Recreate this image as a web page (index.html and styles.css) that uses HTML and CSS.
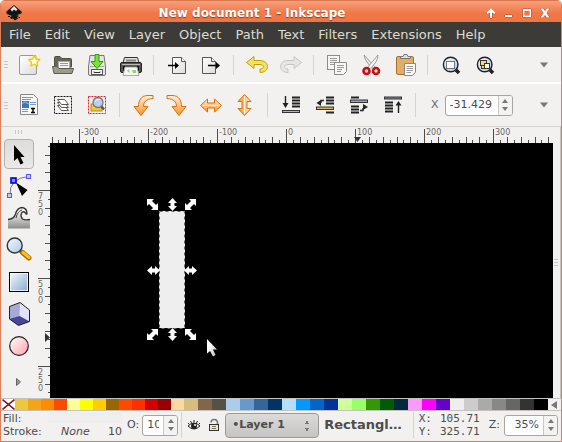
FILE: index.html
```html
<!DOCTYPE html>
<html lang="en">
<head>
<meta charset="utf-8">
<title>New document 1 - Inkscape</title>
<link rel="stylesheet" href="styles.css">
</head>
<body>
<svg class="defs" aria-hidden="true">
  <defs>
    <linearGradient id="paper" x1="0" y1="0" x2="1" y2="1"><stop offset="0" stop-color="#fff"/><stop offset="1" stop-color="#dcdcdc"/></linearGradient>
    <linearGradient id="orange" x1="0" y1="0" x2="0" y2="1"><stop offset="0" stop-color="#fff0dc"/><stop offset="1" stop-color="#fb9226"/></linearGradient>
    <linearGradient id="lens" x1="0" y1="0" x2="1" y2="1"><stop offset="0" stop-color="#f4faff"/><stop offset="1" stop-color="#a9c8ea"/></linearGradient>
    <linearGradient id="blue" x1="0" y1="0" x2="1" y2="1"><stop offset="0" stop-color="#f6fafd"/><stop offset="1" stop-color="#86aace"/></linearGradient>
    <linearGradient id="pink" x1="0" y1="0" x2="1" y2="1"><stop offset="0" stop-color="#fff"/><stop offset="1" stop-color="#ff9fae"/></linearGradient>
    <linearGradient id="wave" x1="0" y1="0" x2="0" y2="1"><stop offset="0.2" stop-color="#f4f4f4"/><stop offset="1" stop-color="#8c8c8c"/></linearGradient>
    <linearGradient id="pointer" x1="0" y1="0" x2="1" y2="1"><stop offset="0.3" stop-color="#fff"/><stop offset="1" stop-color="#bbb"/></linearGradient>
    <symbol id="turn" viewBox="0 0 24 24"><path d="M22 2.500H17C9.500 2.500 7.500 8 7.500 13.500H3L10 22.500 17 13.500H12.500C12.500 9 15 6 22 5.500Z" fill="url(#orange)" stroke="#d4710c" stroke-linejoin="round"/></symbol>
    <symbol id="flip" viewBox="0 0 24 24"><path d="M1.500 12.500 8.500 6V10H15.500V6L22.500 12.500 15.500 19V15H8.500V19Z" fill="url(#orange)" stroke="#d4710c" stroke-linejoin="round"/><path d="M3.500 12.500H20.500" stroke="#fff0d8" stroke-width="1"/></symbol>
    <symbol id="magnify" viewBox="0 0 24 24"><path d="M17 17 20 20" stroke="#222" stroke-width="3.500"/><circle cx="11.700" cy="11.500" r="7.300" fill="url(#lens)" stroke="#222" stroke-width="1.400"/></symbol>
    <symbol id="diag" viewBox="0 0 11 11"><path d="M0 0H7L5 2 9 6 11 4V11H4L6 9 2 5 0 7Z" fill="#fff"/></symbol>
    <symbol id="upright" viewBox="0 0 9 13"><path d="M4.500 0 9 5H6.500V8H9L4.500 13 0 8H2.500V5H0Z" fill="#fff"/></symbol>
    <symbol id="level" viewBox="0 0 13 9"><path d="M0 4.500 5 0V2.500H8V0L13 4.500 8 9V6.500H5V9Z" fill="#fff"/></symbol>
    <pattern id="ticks-x" width="69" height="16" x="29" patternUnits="userSpaceOnUse"><path d="M.5 2V16M7.500 13V16M14.500 10V16M21.500 13V16M28.500 10V16M35.500 13V16M42.500 10V16M48.500 13V16M55.500 10V16M62.500 13V16" stroke="#4c4c4c"/></pattern>
    <pattern id="ticks-y" width="14" height="88" y="47" patternUnits="userSpaceOnUse"><path d="M2 .5H14M12 9.500H14M9 18.500H14M12 26.500H14M9 35.500H14M12 44.500H14M9 53.500H14M12 61.500H14M9 70.500H14M12 79.500H14" stroke="#4c4c4c"/></pattern>
  </defs>
</svg>

<div class="window">
  <header class="titlebar">
    <svg class="logo" width="16" height="16" viewBox="0 0 16 16"><path d="M8 0 15.500 6.500Q16.500 8.500 14 9L11 10 13 11 11 12 12 13.500 9 15.500 7 13.500 5 14 4 12 6 11 2 9.500Q-.5 8.500.5 6.500Z" fill="#151515"/><path d="M8 1 11.500 4.500 10 6 8 4.500 6 6.500 4.500 4.500Z" fill="#dbe7f4"/><path d="M2 11.500H4M12.500 12.500H14" stroke="#151515"/></svg>
    <h1>New document 1 - Inkscape</h1>
    <button class="win" aria-label="Shade"><svg width="12" height="12" viewBox="0 0 12 12"><path d="M6 1 10.500 5.500 9.500 7 7 5.500V11H5V5.500L2.500 7 1.500 5.500Z"/></svg></button>
    <button class="win" aria-label="Minimize"><svg width="12" height="12" viewBox="0 0 12 12"><path d="M2 8H9V10H2Z"/></svg></button>
    <button class="win" aria-label="Maximize"><svg width="12" height="12" viewBox="0 0 12 12"><path fill-rule="evenodd" d="M2 2H10V10H2ZM3.500 4V8.500H8.500V4Z"/></svg></button>
    <button class="win" aria-label="Close"><svg width="12" height="12" viewBox="0 0 12 12"><path d="M1.500 1.500H4L6 4 8 1.500H10.500L7.500 6 10.500 10.500H8L6 8 4 10.500H1.500L4.500 6Z"/></svg></button>
  </header>

  <nav class="menubar">
    <a href="#">File</a><a href="#">Edit</a><a href="#">View</a><a href="#">Layer</a><a href="#">Object</a><a href="#">Path</a><a href="#">Text</a><a href="#">Filters</a><a href="#">Extensions</a><a href="#">Help</a>
  </nav>

  <div class="toolbar commands">
    <span class="grip"></span>
    <button aria-label="New"><svg viewBox="0 0 24 24"><rect x="2.500" y="2.500" width="17" height="19" rx="1.500" fill="url(#paper)" stroke="#999"/><circle cx="17.300" cy="8" r="5.500" fill="#fff9a0" opacity=".6"/><path d="M17.300 2.500 19 6 22.800 6.500 20 9.200 20.700 13 17.300 11.200 13.900 13 14.600 9.200 11.800 6.500 15.600 6Z" fill="#fffde0" stroke="#e8c90a" stroke-width="1.300" stroke-linejoin="round"/></svg></button>
    <button aria-label="Open"><svg viewBox="0 0 24 24"><path d="M3.500 14V4.500Q3.500 3.500 4.500 3.500H9L11 5.500H19.500Q20.500 5.500 20.500 6.500V14Z" fill="#66675a" stroke="#505146"/><rect x="7.500" y="8.500" width="11" height="7" fill="#f5f5f5" stroke="#aaa"/><path d="M9 10.500H17M9 12.500H17" stroke="#999"/><path d="M1.500 13.500H6L8 15.500H22.500L21 20.500H3Z" fill="#9b9c8b" stroke="#5c5d50" stroke-linejoin="round"/></svg></button>
    <button aria-label="Save"><svg viewBox="0 0 24 24"><path d="M5 2.500H19L20.500 14V21Q20.500 22.500 19 22.500H5Q3.500 22.500 3.500 21V14Z" fill="#e4e4e2" stroke="#777"/><path d="M5 13.500H19" stroke="#aaa"/><rect x="6.500" y="16.500" width="11" height="5" fill="#f8f8f8" stroke="#555"/><path d="M9 18.500V19.500H15V18.500" fill="none" stroke="#333"/><path d="M10 1.500H14V8.500H18L12 15.500 6 8.500H10Z" fill="#7be03c" stroke="#339a10" stroke-linejoin="round"/></svg></button>
    <button aria-label="Print"><svg viewBox="0 0 24 24"><path d="M5.500 4.500H18.500L20 10H4Z" fill="#ddd" stroke="#333"/><path d="M7 6.500H17V8.500H7Z" fill="#888"/><rect x="1.500" y="9.500" width="21" height="10" rx="1.500" fill="#555754" stroke="#222"/><path d="M3 11.500H21" stroke="#bbb"/><rect x="4" y="13" width="16" height="5" fill="#111"/><path d="M6 14H18L20 22.500H4Z" fill="#f6f6f6" stroke="#aaa"/><path d="M8 18 10 16 11 20ZM13 17H17V20H14Z" fill="#8fd96c"/></svg></button>
    <i class="sep"></i>
    <button aria-label="Import"><svg viewBox="0 0 24 24"><path d="M7.500 4.500H16.500L20.500 8.500V20.500H7.500Z" fill="url(#paper)" stroke="#555"/><path d="M16.500 4.500V8.500H20.500" fill="#fff" stroke="#555"/><path d="M3 12.500H11" stroke="#000" stroke-width="1.400"/><path d="M10 9 14 12.500 10 16Z"/></svg></button>
    <button aria-label="Export"><svg viewBox="0 0 24 24"><path d="M3.500 4.500H12.500L16.500 8.500V20.500H3.500Z" fill="url(#paper)" stroke="#555"/><path d="M12.500 4.500V8.500H16.500" fill="#fff" stroke="#555"/><path d="M9 12.500H17" stroke="#000" stroke-width="1.400"/><path d="M17 9 21 12.500 17 16Z"/></svg></button>
    <i class="sep"></i>
    <button aria-label="Undo"><svg viewBox="0 0 24 24"><path d="M1.500 9.500 9 3.500V7.500H15C25 7.500 25 19.500 15 19.500V16C19.500 16 19.500 11.500 15 11.500H9V15.500Z" fill="#f4e060" stroke="#c0a000" stroke-linejoin="round"/></svg></button>
    <button aria-label="Redo"><svg viewBox="0 0 24 24"><path d="M22.500 9.500 15 3.500V7.500H9C-1 7.500-1 19.500 9 19.500V16C4.500 16 4.500 11.500 9 11.500H15V15.500Z" fill="#e6e6e5" stroke="#c4c4c2" stroke-linejoin="round"/></svg></button>
    <i class="sep"></i>
    <button aria-label="Copy"><svg viewBox="0 0 24 24"><rect x="2.500" y="2.500" width="12" height="14" fill="#f7f7f7" stroke="#8a8c88"/><path d="M5 5.500H12M5 7.500H12M5 9.500H11M5 11.500H12" stroke="#999"/><path d="M9.500 9.500H21.500V18.500L18.500 21.500H9.500Z" fill="#f7f7f7" stroke="#8a8c88"/><path d="M12 12.500H19M12 14.500H19M12 16.500H17M12 18.500H16" stroke="#999"/></svg></button>
    <button aria-label="Cut"><svg viewBox="0 0 24 24"><path d="M5 2Q6 9 14.500 16L16 14Z" fill="#e8e8e8" stroke="#888" stroke-width=".8"/><path d="M19 2Q19 9 10.500 16L9 14Z" fill="#f8f8f8" stroke="#888" stroke-width=".8"/><ellipse cx="7.500" cy="18" rx="3" ry="3" fill="#f1dada" stroke="#c80f18" stroke-width="2.600"/><ellipse cx="17" cy="18" rx="3" ry="3" fill="#f1dada" stroke="#c80f18" stroke-width="2.600"/></svg></button>
    <button aria-label="Paste"><svg viewBox="0 0 24 24"><rect x="3.500" y="3.500" width="17" height="18" rx="1.500" fill="#e0ae64" stroke="#a5742c"/><path d="M7.500 5.500V3.500H10L11 1.500H14L15 3.500H17.500V5.500Z" fill="#ddd" stroke="#777"/><path d="M11.500 10.500H22.500V19L19.500 22.500H11.500Z" fill="#fafafa" stroke="#888"/><path d="M13.500 13.500H20M13.500 15.500H20M13.500 17.500H20M13.500 19.500H18" stroke="#999"/></svg></button>
    <i class="sep"></i>
    <button aria-label="Zoom to selection"><svg viewBox="0 0 24 24"><use href="#magnify"/><rect x="7.500" y="8.500" width="8" height="7" fill="#fff" stroke="#000" stroke-dasharray="1 1"/></svg></button>
    <button aria-label="Zoom to drawing"><svg viewBox="0 0 24 24"><use href="#magnify"/><rect x="7.500" y="7.500" width="6" height="5" fill="#f5d878" stroke="#333"/><rect x="8.500" y="12.500" width="3" height="3" fill="#f5d878" stroke="#333"/><rect x="11.500" y="10.500" width="5" height="5" fill="#fff7d0" stroke="#333"/></svg></button>
    <button class="more" aria-label="More commands"><svg class="tri" viewBox="0 0 8 6"><path d="M0 .5H8L4 5.500Z"/></svg></button>
  </div>

  <div class="toolbar controls">
    <span class="grip"></span>
    <button aria-label="Select all"><svg viewBox="0 0 24 24"><path d="M3.500 1.500H16.500L20.500 5.500V21.500H3.500Z" fill="#f7f7f7" stroke="#888"/><path d="M5 4.500H16M5 6.500H14M13 9.500H19M13 11.500H19M5 16.500H11M5 18.500H11" stroke="#6f9bcd"/><rect x="5" y="8" width="7" height="7" fill="#3c74b4"/><path d="M5 10.500 8 9 12 11" stroke="#9cc0e8" fill="none"/><rect x="12" y="14" width="8" height="7" fill="#fff"/><path d="M14 15.500H18M16 15.500V19.500M14 19.500H18" stroke="#000" stroke-width="1.400"/></svg></button>
    <button aria-label="Select all in all layers"><svg viewBox="0 0 24 24"><rect x="3.500" y="3.500" width="17" height="17" fill="none" stroke="#111" stroke-dasharray="2 1"/><g fill="#fff" stroke="#555"><path d="M6.500 12.500H13.500L17.500 17.500H10.500Z"/><path d="M6.500 9.500H13.500L17.500 14.500H10.500Z"/><path d="M6.500 6.500H13.500L17.500 11.500H10.500Z"/></g></svg></button>
    <button aria-label="Deselect"><svg viewBox="0 0 24 24"><rect x="3.500" y="3.500" width="17" height="17" fill="none" stroke="#e0202c" stroke-dasharray="2 1"/><rect x="6" y="11" width="11" height="7" fill="#f4c23c" stroke="#b98a15"/><path d="M16 13 19 16.500" stroke="#555" stroke-width="2.500"/><circle cx="13" cy="9.500" r="5" fill="#b8d0ec" stroke="#777" stroke-width="1.300"/><path d="M10 8.500Q11.500 6 14.500 6.500" stroke="#fff" fill="none"/></svg></button>
    <i class="sep"></i>
    <button aria-label="Rotate left"><svg viewBox="0 0 24 24"><use href="#turn"/></svg></button>
    <button aria-label="Rotate right"><svg viewBox="0 0 24 24"><use href="#turn" transform="matrix(-1 0 0 1 24 0)"/></svg></button>
    <button aria-label="Flip horizontal"><svg viewBox="0 0 24 24"><use href="#flip"/></svg></button>
    <button aria-label="Flip vertical"><svg viewBox="0 0 24 24"><use href="#flip" transform="rotate(90 12 12)"/></svg></button>
    <i class="sep"></i>
    <button aria-label="Lower to bottom"><svg viewBox="0 0 24 24"><path d="M13 4.500H21M13 7.500H21M13 10.500H21M13 13.500H21" stroke="#222" stroke-width="2"/><path d="M6.500 3V12" stroke="#222" stroke-width="1.400"/><path d="M3.500 10H9.500L6.500 15Z" fill="#222"/><rect x="3.500" y="17.500" width="17" height="2" fill="#d7b45a" stroke="#333"/></svg></button>
    <button aria-label="Lower"><svg viewBox="0 0 24 24"><path d="M13 4.500H21M13 7.500H21M13 10.500H21M13 19.500H21" stroke="#222" stroke-width="2"/><path d="M11 7.500H8V10" stroke="#222" fill="none" stroke-width="1.400"/><path d="M3.500 10 8 7V13Z" fill="#222"/><rect x="3.500" y="14" width="17" height="2.500" fill="#d7b45a" stroke="#333"/></svg></button>
    <button aria-label="Raise"><svg viewBox="0 0 24 24"><path d="M4 4.500H12M4 13.500H12M4 16.500H12M4 19.500H12" stroke="#222" stroke-width="2"/><path d="M13 17.500H16V15" stroke="#222" fill="none" stroke-width="1.400"/><path d="M21 14 16 11V17Z" fill="#222"/><rect x="3.500" y="7" width="17" height="2.500" fill="#9aa7b4" stroke="#333"/></svg></button>
    <button aria-label="Raise to top"><svg viewBox="0 0 24 24"><path d="M4 9.500H12M4 12.500H12M4 15.500H12M4 18.500H12" stroke="#222" stroke-width="2"/><path d="M17.500 12V20" stroke="#222" stroke-width="1.400"/><path d="M14.500 12.500H20.500L17.500 8Z" fill="#222"/><rect x="3.500" y="4" width="17" height="2" fill="#7d8a99" stroke="#333"/></svg></button>
    <i class="sep"></i>
    <label class="coord" for="pos-x">X</label>
    <span class="spin spin-x"><input id="pos-x" type="text" value="-31.429"><span class="steps"><button aria-label="Increase X"></button><button class="down" aria-label="Decrease X"></button></span></span>
    <button class="more" aria-label="More controls"><svg class="tri" viewBox="0 0 8 6"><path d="M0 .5H8L4 5.500Z"/></svg></button>
  </div>

  <main class="work">
    <div class="toolbox">
      <span class="grip-flat"></span>
      <button class="active" aria-label="Selector"><svg viewBox="0 0 28 28"><path d="M9 5V21L12.500 18 15.500 24.500 18.500 23 15.500 17H19.500Z"/></svg></button>
      <button aria-label="Node editor"><svg viewBox="0 0 28 28"><path d="M5 23Q4 6 24 4.500" fill="none" stroke="#777"/><path d="M11 10.500 22.500 18 17 24Z"/><rect x="6" y="6" width="5" height="5" fill="#88f" stroke="#0000d8" stroke-width="1.600"/><rect x="2.500" y="21.500" width="4" height="4" fill="#c8c8ff" stroke="#55f"/><rect x="21.500" y="2.500" width="4" height="4" fill="#c8c8ff" stroke="#55f"/></svg></button>
      <button aria-label="Tweak"><svg viewBox="0 0 28 28"><path d="M3 24.500V15.500Q9 15 10.500 10Q12 4 17 3.500Q22 4 22 10Q19 5.500 16.500 9Q15 12 17.500 15Q20 16.500 25 15.500V24.500Z" fill="url(#wave)"/><path d="M3 15.500Q9 15 10.500 10Q12 4 17 3.500Q22 4 22 10Q21 10.500 20.500 9Q18 6.500 16.500 9Q15 12 17.500 15Q20 16.500 25 15.500" fill="none" stroke="#333" stroke-width="1.300"/><path d="M11 14Q12.500 7 17 6" stroke="#444" fill="none"/></svg></button>
      <button aria-label="Zoom"><svg viewBox="0 0 28 28"><path d="M15 15 18 18" stroke="#555" stroke-width="3"/><path d="M17.500 16.500 24 22" stroke="#a96a00" stroke-width="5" stroke-linecap="round"/><path d="M18 16.500 24 21.500" stroke="#ffbe1e" stroke-width="3" stroke-linecap="round"/><circle cx="9.700" cy="9.500" r="7.500" fill="url(#lens)" stroke="#333" stroke-width="1.400"/></svg></button>
      <button aria-label="Rectangle"><svg viewBox="0 0 28 28"><rect x="4.500" y="4.500" width="19" height="19" fill="url(#blue)" stroke="#000"/><rect x="5.500" y="5.500" width="17" height="17" fill="none" stroke="#fff" opacity=".7"/></svg></button>
      <button aria-label="3D box"><svg viewBox="0 0 28 28"><path d="M4.500 6.500 15 2.500 24.500 10V21.500L13.500 25.500 4.500 19Z" fill="#a9a9d6"/><path d="M15 2.500 24.500 10V21.500L14.500 16Z" fill="#e2e2fb"/><path d="M4.500 19 14.500 16 24.500 21.500 13.500 25.500Z" fill="#45459a"/><path d="M4.500 6.500 15 2.500 24.500 10V21.500L13.500 25.500 4.500 19Z" fill="none" stroke="#222"/></svg></button>
      <button aria-label="Ellipse"><svg viewBox="0 0 28 28"><circle cx="14" cy="14" r="9.300" fill="url(#pink)" stroke="#222" stroke-width="1.200"/></svg></button>
      <button class="expand" aria-label="More tools"><svg class="next" viewBox="0 0 5 8"><path d="M.5.5 4.500 4 .5 7.500Z" fill="#999" stroke="#666"/></svg></button>
    </div>

    <div class="sheet">
      <div class="ruler-x">
        <svg><rect width="100%" height="16" fill="url(#ticks-x)"/><path d="M304 10H311L307.500 15Z" fill="#333"/></svg>
        <span>-300</span><span>-200</span><span>-100</span><span>0</span><span>100</span><span>200</span><span>300</span>
      </div>
      <div class="ruler-y">
        <svg><rect width="14" height="100%" fill="url(#ticks-y)"/><path d="M9 190V199L14 194.500Z" fill="#333"/></svg>
        <span>750</span><span>500</span><span>250</span>
      </div>
      <div class="canvas">
        <svg>
          <rect x="109" y="68" width="26" height="117" fill="#eee"/>
          <rect x="109.500" y="68.500" width="25" height="117" fill="none" stroke="#666" stroke-dasharray="3 3"/>
          <use href="#diag" x="97" y="56" width="11" height="11"/>
          <use href="#upright" x="118" y="55" width="9" height="13"/>
          <use href="#diag" width="11" height="11" transform="matrix(-1 0 0 1 146 56)"/>
          <use href="#level" x="97" y="123" width="13" height="9"/>
          <use href="#level" x="134" y="123" width="13" height="9"/>
          <use href="#diag" width="11" height="11" transform="matrix(1 0 0 -1 97 197)"/>
          <use href="#upright" x="118" y="185" width="9" height="13"/>
          <use href="#diag" x="135" y="186" width="11" height="11"/>
          <path d="M157 196V210.500L160 208 163 213.500 165.500 212 163 206.500H167Z" fill="url(#pointer)"/>
        </svg>
      </div>
    </div>
    <div class="dock"><span class="grip"></span></div>
  </main>

  <div class="palette">
    <div class="swatches">
      <svg viewBox="0 0 13 10" preserveAspectRatio="none"><rect width="13" height="10" fill="#fff"/><path d="M.5.500 12.500 9.500M12.500.500.500 9.500" stroke="#7a1420" stroke-width="1.400"/></svg>
      <b style="background:#edc83e"></b><b style="background:#f2a516"></b><b style="background:#ff8c00"></b><b style="background:#fa4b00"></b><b style="background:#ffff99"></b><b style="background:#ffff00"></b><b style="background:#ffcc00"></b><b style="background:#996600"></b><b style="background:#ff4b00"></b><b style="background:#ff3000"></b><b style="background:#d40000"></b><b style="background:#990000"></b><b style="background:#fcd9a0"></b>
      <b style="background:#d8bc7c"></b><b style="background:#826647"></b><b style="background:#555243"></b><b style="background:#aaccee"></b><b style="background:#6699cc"></b><b style="background:#336699"></b><b style="background:#003366"></b><b style="background:#b3deff"></b><b style="background:#0099ff"></b><b style="background:#0066cc"></b><b style="background:#003399"></b><b style="background:#ccff99"></b><b style="background:#99ff66"></b><b style="background:#339900"></b><b style="background:#005c00"></b><b style="background:#002b3d"></b><b style="background:#ff99ff"></b><b style="background:#ff00ff"></b><b style="background:#6600cc"></b><b style="background:#eeeeee"></b><b style="background:#cccccc"></b><b style="background:#aaaaaa"></b><b style="background:#888888"></b><b style="background:#666666"></b><b style="background:#333333"></b><b style="background:#000000"></b>
    </div>
    <button aria-label="Palette menu"><svg width="6" height="8" viewBox="0 0 6 8"><path d="M6 0V8L0 4Z" fill="#777"/></svg></button>
  </div>

  <footer class="status">
    <div class="style">
      <span>Fill:</span><span class="fill"></span>
      <span>Stroke:</span><span class="stroke"><em>None</em><span>10</span></span>
    </div>
    <label class="opacity" for="opacity">O:</label>
    <span class="spin spin-o"><input id="opacity" type="text" value="100"><span class="steps"><button aria-label="Increase opacity"></button><button class="down" aria-label="Decrease opacity"></button></span></span>
    <i class="sep"></i>
    <button class="eye" aria-label="Layer visibility"><svg width="14" height="14" viewBox="0 0 14 14"><path d="M1 8Q7 2 13 8Q7 14 1 8Z" fill="#fff" stroke="#222"/><circle cx="7" cy="8" r="3" fill="#222"/><circle cx="8" cy="7" r="1" fill="#fff"/><path d="M1 5 2.500 6.500M3.500 3 4.500 5M7 2V4.500M10.500 3 9.500 5M13 5 11.500 6.500" stroke="#222"/></svg></button>
    <button class="lock" aria-label="Layer lock"><svg width="12" height="14" viewBox="0 0 12 14"><path d="M3 4.500Q3 1.500 6 1.500 9.500 1.500 9.500 5V7" fill="none" stroke="#777" stroke-width="1.600"/><rect x="1.500" y="6.500" width="9" height="6" fill="#f3e9a8" stroke="#333"/><path d="M4 8.500H8M4 10.500H8" stroke="#777"/></svg></button>
    <select aria-label="Layer"><option>•Layer 1</option></select>
    <strong>Rectangl…</strong>
    <i class="sep"></i>
    <div class="pointer"><span>X:</span><span>105.71</span><span>Y:</span><span>325.71</span></div>
    <label class="zoom" for="zoom">Z:</label>
    <span class="spin spin-z"><input id="zoom" type="text" value="35%"><span class="steps"><button aria-label="Zoom in"></button><button class="down" aria-label="Zoom out"></button></span></span>
  </footer>
</div>
</body>
</html>
```

FILE: styles.css
```css
* { box-sizing: border-box; }
body {
  margin: 0;
  background: #fff;
  color: #4c4c4c;
  font: 11px/14px "DejaVu Sans", sans-serif;
}
button { margin: 0; padding: 0; border: 0; background: none; color: inherit; font: inherit; }
svg { display: block; }
.defs { position: absolute; width: 0; height: 0; }

.window {
  display: flex;
  flex-direction: column;
  min-height: 100vh;
  border: 1px solid #dd7f5a;
  border-top: 0;
  border-radius: 5px 5px 0 0;
  background: #f2f1f0;
  overflow: hidden;
}

/* Title bar and menus */
.titlebar {
  display: flex;
  align-items: center;
  height: 22px;
  padding: 2px 7px 0 5px;
  border-top: 1px solid #d9774f;
  background: linear-gradient(#f79e7c, #f07746 60%, #f07544);
}
.logo { flex: none; }
.titlebar h1 {
  flex: 1;
  margin: 0;
  color: #fff;
  font-size: 12px;
  text-align: center;
  text-shadow: 0 1px 1px #8c3b1c;
}
.win { display: flex; justify-content: center; width: 18px; }
.win svg { overflow: visible; }
.win path { fill: #fff; stroke: #b5532b; stroke-width: 1; paint-order: stroke; }
.menubar {
  display: flex;
  gap: 14px;
  height: 25px;
  padding: 0 8px;
  background: #3c3b37;
  font-size: 13px;
  line-height: 25px;
}
.menubar a { color: #dfdbd2; text-decoration: none; }

/* Tool bars */
.toolbar { display: flex; align-items: center; }
.toolbar > button { flex: none; display: flex; justify-content: center; width: 34px; }
.toolbar svg { width: 24px; height: 24px; }
.commands { height: 37px; border-bottom: 2px solid #fff; }
.controls { height: 43px; border-bottom: 1px solid #d5d2cd; }
.grip {
  flex: none;
  width: 4px;
  height: 7px;
  margin: 0 4px 0 3px;
  background: repeating-linear-gradient(#c9c6c2 0 1px, transparent 1px 3px);
}
.sep { flex: none; width: 1px; margin: 0 6px 0 5px; background: #d5d3d0; }
.commands .sep { height: 20px; }
.controls .sep { height: 24px; }
.toolbar > .more { width: 34px; margin-left: auto; }
.toolbar .tri { width: 8px; height: 6px; fill: #777; }
.coord { margin: 0 6px 0 9px; color: #666; }

.spin {
  display: flex;
  height: 21px;
  border: 1px solid #a8a5a1;
  border-radius: 3px;
  background: #fff;
  overflow: hidden;
}
.spin input {
  flex: 1;
  min-width: 0;
  padding: 0 4px;
  border: 0;
  background: none;
  color: #4c4c4c;
  font: inherit;
}
.steps {
  display: flex;
  flex-direction: column;
  justify-content: center;
  align-items: center;
  gap: 4px;
  width: 14px;
  border-left: 1px solid #ccc9c5;
  background: #f4f3f2;
}
.steps button { border: 3px solid transparent; border-top: 0; border-bottom: 4px solid #777; }
.steps .down { border-top: 4px solid #777; border-bottom: 0; }
.spin-x { width: 68px; }
.spin-o { width: 36px; }
.spin-z { width: 54px; }
.spin-z input { text-align: right; }

/* Tools, rulers and canvas */
.work { flex: 1; display: flex; }
.toolbox {
  display: flex;
  flex-direction: column;
  align-items: center;
  gap: 2px;
  width: 35px;
  padding-top: 3px;
}
.toolbox button {
  display: flex;
  align-items: center;
  justify-content: center;
  width: 30px;
  height: 30px;
  border: 1px solid transparent;
  border-radius: 4px;
}
.toolbox .active { border-color: #b5b2ae; background: linear-gradient(#dedcda, #ebe9e7); }
.toolbox svg { width: 28px; height: 28px; }
.toolbox .expand { height: 24px; margin-top: 7px; }
.toolbox .next { width: 5px; height: 8px; }
.grip-flat {
  width: 7px;
  height: 4px;
  margin-bottom: 3px;
  background: repeating-linear-gradient(90deg, #c9c6c2 0 1px, transparent 1px 3px);
}
.sheet {
  flex: 1;
  display: grid;
  grid-template: 16px 1fr / 14px 1fr;
  color: #666;
  font-size: 8px;
  line-height: 8px;
}
.ruler-x, .ruler-y, .canvas { position: relative; display: flex; overflow: hidden; }
.sheet svg { position: absolute; inset: 0; width: 100%; height: 100%; }
.ruler-x { grid-column: 2; padding: 2px 0 0 31px; }
.ruler-x span { flex: none; width: 69px; }
.ruler-y { flex-direction: column; gap: 64px; padding: 50px 0 0 2px; }
.ruler-y span { flex: none; width: 5px; height: 24px; overflow-wrap: anywhere; }
.canvas { background: #000; }
.dock { display: flex; align-items: center; width: 8px; border-right: 1px solid #c5c2be; }
.dock .grip { margin: 0 1px; }

/* Palette */
.palette { display: flex; align-items: center; height: 13px; border: 1px solid #c5c2be; border-width: 1px 0; }
.swatches {
  flex: 1;
  display: grid;
  grid-template-columns: repeat(14, 13px) repeat(26, 1fr);
  height: 11px;
  padding-left: 1px;
}
.swatches svg { width: 100%; height: 100%; }
.palette button { width: 13px; padding-left: 3px; }

/* Status bar */
.status { display: flex; align-items: center; height: 30px; padding: 0 3px 2px 2px; }
.style {
  display: grid;
  grid-template: 13px 13px / 45px 74px;
  line-height: 13px;
}
.fill { height: 11px; background: #eee; }
.stroke { display: flex; justify-content: space-between; padding-left: 13px; }
.opacity { margin: 0 3px 0 5px; }
.status .sep { height: 26px; margin: 0 5px 0 3px; }
.eye, .lock { flex: none; }
.lock { margin: 0 5px 0 7px; }
.status select {
  appearance: none;
  width: 94px;
  height: 25px;
  margin: 0;
  padding: 0 6px;
  border: 1px solid #9c9996;
  border-radius: 4px;
  background:
    conic-gradient(from 150deg at 50% 0, #777 60deg, transparent 0) right 8px top 6px / 6px 4px no-repeat,
    conic-gradient(from -30deg at 50% 100%, #777 60deg, transparent 0) right 8px top 14px / 6px 4px no-repeat,
    linear-gradient(#dcdbda, #c6c4c2);
  color: #4c4c4c;
  font: bold 11px/14px "DejaVu Sans", sans-serif;
}
.status strong { flex: 1; margin-left: 5px; font-size: 13px; white-space: nowrap; }
.pointer {
  display: grid;
  grid-template: 13px 13px / auto auto;
  column-gap: 8px;
  font: 11px/13px "DejaVu Sans Mono", monospace;
}
.zoom { margin: 0 4px 0 9px; }
```
